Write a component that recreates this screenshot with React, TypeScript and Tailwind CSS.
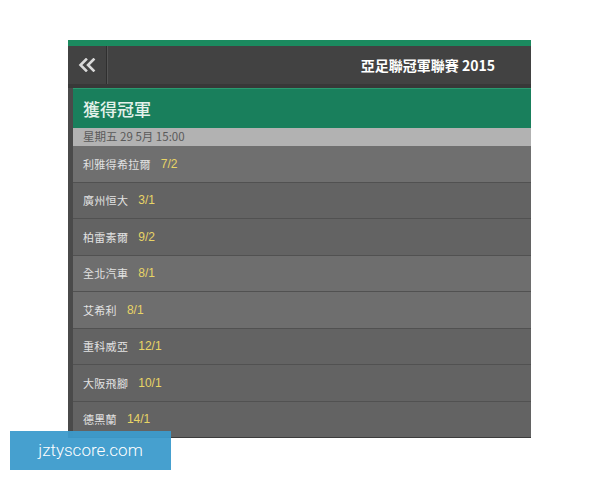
import React from "react";

const rows = [
  { name: "利雅得希拉爾", odds: "7/2", bg: "bg-[#6f6f6f]" },
  { name: "廣州恒大", odds: "3/1", bg: "bg-[#636363]" },
  { name: "柏雷素爾", odds: "9/2", bg: "bg-[#636363]" },
  { name: "全北汽車", odds: "8/1", bg: "bg-[#6e6e6e]" },
  { name: "艾希利", odds: "8/1", bg: "bg-[#6e6e6e]" },
  { name: "重科威亞", odds: "12/1", bg: "bg-[#636363]" },
  { name: "大阪飛腳", odds: "10/1", bg: "bg-[#636363]" },
  { name: "德黑蘭", odds: "14/1", bg: "bg-[#636363]" },
];

const cjk = { fontFamily: '"Noto Sans CJK TC", "Liberation Sans", sans-serif' };

function App() {
  return (
    <div className="relative w-[600px] h-[480px] bg-white overflow-hidden" style={cjk}>
      <div className="ml-[68px] mt-[40px] w-[463px] h-[398px] flex flex-col bg-[#4a4a4a] overflow-hidden border-b border-[#3c3c3c]">
        <div className="h-[6px] bg-[#1b8a5f] shrink-0" />
        <div className="h-[38px] bg-[#424242] flex items-center shrink-0">
          <div className="w-[39px] h-full flex items-center justify-center border-r border-[#2f2f2f] shadow-[1px_0_0_#555]">
            <svg width="18" height="14" viewBox="0 0 18 14" fill="none" stroke="#d9d9d9" strokeWidth="2.6" strokeLinecap="square">
              <path d="M8 1.5 L2.5 7 L8 12.5" />
              <path d="M15.5 1.5 L10 7 L15.5 12.5" />
            </svg>
          </div>
          <div className="flex-1 flex justify-end pr-[36px]">
            <span className="text-white text-[14px] font-bold">亞足聯冠軍聯賽 2015</span>
          </div>
        </div>
        <div className="h-[4px] bg-[#383838] shrink-0" />
        <div className="flex-1 pl-[5px] flex flex-col">
          <div className="h-[40px] bg-[#197f5c] border-t border-[#2a9a70] flex items-center pl-[10px] shrink-0">
            <span className="text-[#e4f1ea] text-[17px] font-medium">獲得冠軍</span>
          </div>
          <div className="h-[18px] bg-[#b2b2b2] flex items-center pl-[10px] shrink-0">
            <span className="text-[#5a5a5a] text-[11.5px] leading-none">星期五 29 5月 15:00</span>
          </div>
          {rows.map((r) => (
            <div
              key={r.name}
              className={`h-[36.5px] shrink-0 flex items-center pl-[10px] gap-[10px] border-b border-[#515151] ${r.bg}`}
            >
              <span className="text-[#e2e2e2] text-[11px] tracking-[0.3px]">{r.name}</span>
              <span
                className="text-[#e8d466] text-[12px]"
                style={{ fontFamily: '"Liberation Sans", sans-serif' }}
              >
                {r.odds}
              </span>
            </div>
          ))}
        </div>
      </div>
      <div className="absolute left-[10px] top-[431px] w-[161px] h-[39px] bg-[#3c9bcc]/95 flex items-center justify-center">
        <span className="text-white text-[17px]" style={{ fontFamily: "Roboto, sans-serif", fontWeight: 300 }}>
          jztyscore.com
        </span>
      </div>
    </div>
  );
}

export default App;
